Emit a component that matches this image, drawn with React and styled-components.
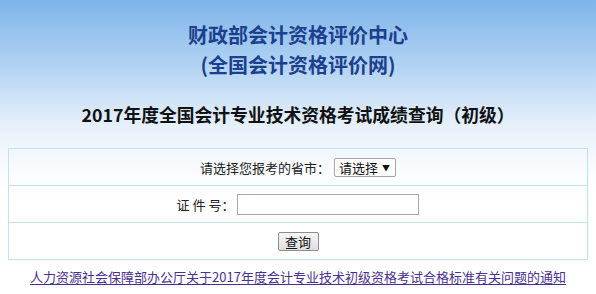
import React from "react";
import styled, { createGlobalStyle } from "styled-components";

const GlobalStyle = createGlobalStyle`
  html, body {
    margin: 0;
    padding: 0;
  }
  body {
    background: #fff;
    font-family: "Noto Sans CJK SC", "Liberation Sans", sans-serif;
  }
`;

const Page = styled.div`
  width: 596px;
  height: 294px;
  overflow: hidden;
  display: flex;
  flex-direction: column;
  align-items: center;
  background: linear-gradient(to bottom, #7db4ea 0px, #b6d5f3 70px, #e6f0fb 125px, #f8fbfe 165px, #ffffff 200px);
`;

const Heading = styled.h1`
  margin: 0;
  padding-top: 20px;
  font-size: 20px;
  line-height: 30px;
  font-weight: bold;
  color: #1c3f8e;
  text-align: center;
`;

const SubHeading = styled.h2`
  margin: 22px 0 0;
  font-size: 17.8px;
  line-height: 24px;
  font-weight: bold;
  color: #111;
  text-align: center;
`;

const Form = styled.div`
  margin-top: 22px;
  width: 580px;
  box-sizing: border-box;
  border: 1px solid #c3e2e8;
  display: flex;
  flex-direction: column;
`;

const Row = styled.div`
  height: 36px;
  display: flex;
  align-items: center;
  justify-content: center;
  gap: ${(p) => p.$gap || 0}px;
  border-top: ${(p) => (p.$first ? "none" : "1px solid #c3e2e8")};
  font-size: 13px;
  color: #222;
`;

const Label = styled.span`
  white-space: pre;
`;

const SelectBox = styled.div`
  width: 62px;
  height: 19px;
  box-sizing: border-box;
  border: 1px solid #a5a5a5;
  border-radius: 2px;
  background: #fff;
  display: flex;
  align-items: center;
  justify-content: space-between;
  padding: 0 5px 0 4px;
  font-size: 13px;
  color: #111;
`;

const Caret = styled.span`
  font-size: 8px;
  color: #111;
`;

const TextInput = styled.input`
  width: 182px;
  height: 21px;
  box-sizing: border-box;
  border: 1px solid #a9a9a9;
  padding: 0 3px;
  margin: 0;
  background: #fff;
  outline: none;
`;

const Button = styled.button`
  width: 41px;
  height: 19px;
  box-sizing: border-box;
  margin: 0;
  padding: 0;
  border: 1px solid #8d8d8d;
  border-radius: 2px;
  background: linear-gradient(to bottom, #f7f7f7, #dedede);
  font-family: "Noto Sans CJK SC", sans-serif;
  font-size: 13px;
  line-height: 17px;
  color: #111;
`;

const Notice = styled.a`
  margin-top: 7px;
  font-size: 13px;
  line-height: 20px;
  color: #4b2f8f;
  text-decoration: underline;
  text-underline-offset: 2px;
  white-space: nowrap;
`;

export default function App() {
  return (
    <>
      <GlobalStyle />
      <Page>
        <Heading>
          财政部会计资格评价中心
          <br />
          (全国会计资格评价网)
        </Heading>
        <SubHeading>2017年度全国会计专业技术资格考试成绩查询（初级）</SubHeading>
        <Form>
          <Row $first $gap={4}>
            <Label>请选择您报考的省市：</Label>
            <SelectBox>
              <span>请选择</span>
              <Caret>▼</Caret>
            </SelectBox>
          </Row>
          <Row $gap={3}>
            <Label>证 件 号：</Label>
            <TextInput type="text" />
          </Row>
          <Row>
            <Button type="button">查询</Button>
          </Row>
        </Form>
        <Notice href="#">
          人力资源社会保障部办公厅关于2017年度会计专业技术初级资格考试合格标准有关问题的通知
        </Notice>
      </Page>
    </>
  );
}
